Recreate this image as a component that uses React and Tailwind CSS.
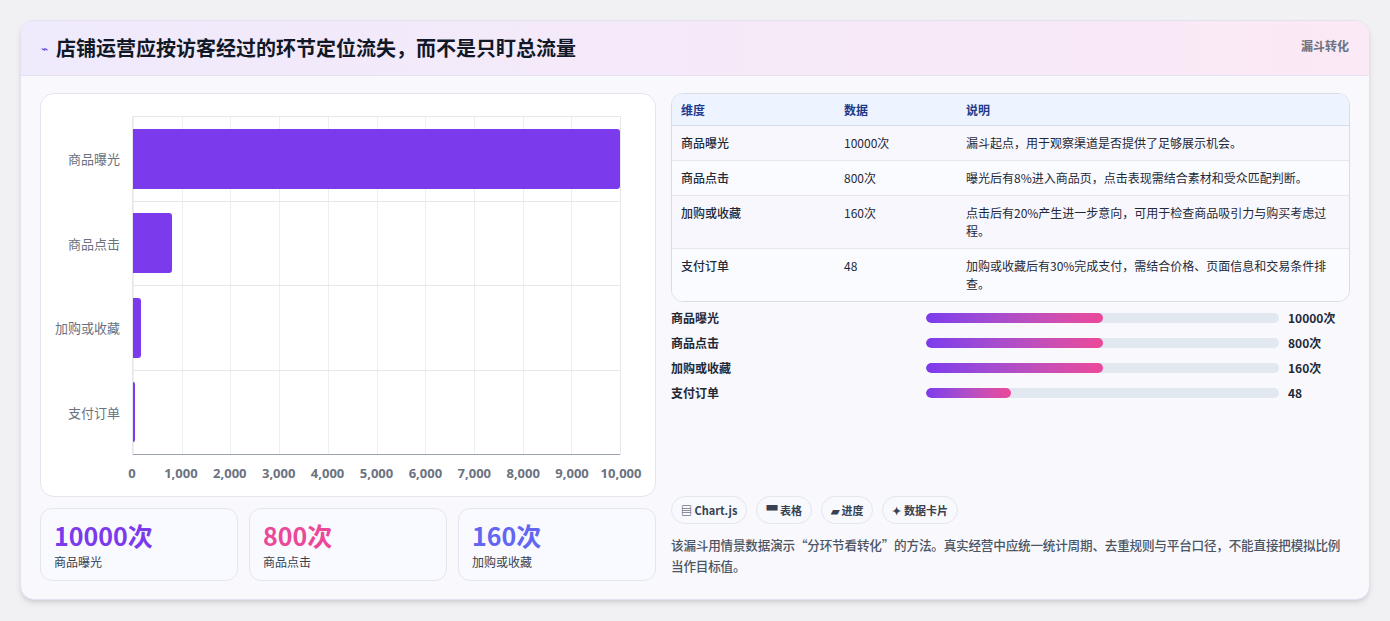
export default function App() {
  const font = { fontFamily: '"Noto Sans CJK SC", "Noto Sans", sans-serif' };
  const rows = [
    ["商品曝光", "10000次", "漏斗起点，用于观察渠道是否提供了足够展示机会。", 10000],
    ["商品点击", "800次", "曝光后有8%进入商品页，点击表现需结合素材和受众匹配判断。", 800],
    ["加购或收藏", "160次", "点击后有20%产生进一步意向，可用于检查商品吸引力与购买考虑过程。", 160],
    ["支付订单", "48", "加购或收藏后有30%完成支付，需结合价格、页面信息和交易条件排查。", 48],
  ];
  const ticks = ["0", "1,000", "2,000", "3,000", "4,000", "5,000", "6,000", "7,000", "8,000", "9,000", "10,000"];
  return (
    <div className="w-[1390px] h-[621px] bg-[#f1f1f4] p-[20px] pb-0" style={font}>
      <div className="h-[580px] rounded-[14px] bg-[#f8f8fd] border border-[#e3e1f0] shadow-md overflow-hidden flex flex-col">
        <div className="h-[55px] flex items-center justify-between px-[20px] bg-gradient-to-r from-[#efeafc] to-[#fbe9f5] border-b border-[#e6e2f3]">
          <div className="flex items-center gap-2">
            <span className="text-[#4f46e5] text-[12px]">⌁</span>
            <span className="text-[20px] font-bold text-[#111827]">店铺运营应按访客经过的环节定位流失，而不是只盯总流量</span>
          </div>
          <span className="text-[12px] font-bold text-[#6b7280] self-start mt-[16px]">漏斗转化</span>
        </div>
        <div className="flex gap-[15px] px-[19px] pt-[17px]">
          <div className="w-[616px] flex flex-col gap-[11px]">
            <div className="h-[404px] bg-white rounded-[14px] border border-[#e3e6ef] relative">
              <div className="absolute left-[91px] top-[22px] w-[489px] h-[339px] border-l border-t border-r border-[#e5e7eb] flex flex-col">
                {[0,1,2,3,4,5,6,7,8,9].map(i => (
                  <div key={i} className="absolute top-0 bottom-0 border-l border-[#eceef2]" style={{ left: `${i * 10}%` }} />
                ))}
                {rows.map((r, i) => (
                  <div key={i} className={`flex-1 flex items-center relative ${i < 3 ? "border-b border-[#e5e7eb]" : "border-b border-[#9ca3af]"}`}>
                    <span className="absolute right-[500px] text-[13px] text-[#6b7280] whitespace-nowrap">{r[0]}</span>
                    <div className="h-[60px] bg-[#7c3aed] rounded-r-[3px] relative" style={{ width: `${Math.max(r[3] / 100, 0.4)}%`, minWidth: 2 }} />
                  </div>
                ))}
              </div>
              <div className="absolute left-[91px] top-[370px] w-[489px]">
                {ticks.map((t, i) => (
                  <span key={i} className="absolute -translate-x-1/2 text-[13px] font-bold text-[#6b7280]" style={{ left: `${i * 10}%`, fontFamily: '"Open Sans", sans-serif' }}>{t}</span>
                ))}
              </div>
            </div>
            <div className="flex gap-[11px]">
              {[["10000次", "商品曝光", "text-[#7c3aed]"], ["800次", "商品点击", "text-[#ec4899]"], ["160次", "加购或收藏", "text-[#6366f1]"]].map((s, i) => (
                <div key={i} className="w-[198px] h-[73px] bg-[#f8faff] rounded-[12px] border border-[#e3e6ef] px-[13px] pt-[8px]">
                  <div className={`text-[25px] font-bold leading-[36px] ${s[2]}`}>{s[0]}</div>
                  <div className="text-[12px] text-[#374151]">{s[1]}</div>
                </div>
              ))}
            </div>
          </div>
          <div className="flex-1 flex flex-col">
            <div className="rounded-[12px] border border-[#d8dce8] overflow-hidden text-[12px] text-[#1f2937] bg-white">
              <div className="flex h-[32px] items-center bg-[#eef4ff] border-b border-[#d8dce8] font-bold text-[#1e3a8a]">
                <div className="w-[172px] pl-[9px]">维度</div>
                <div className="w-[122px]">数据</div>
                <div className="flex-1">说明</div>
              </div>
              {rows.map((r, i) => (
                <div key={i} className={`flex py-[8px] leading-[18px] ${i % 2 ? "bg-[#fafbff]" : "bg-[#f8f7fd]"} ${i < 3 ? "border-b border-[#e5e7eb]" : ""}`}>
                  <div className="w-[172px] pl-[9px] font-medium">{r[0]}</div>
                  <div className="w-[122px]">{r[1]}</div>
                  <div className="flex-1 pr-[14px]">{r[2]}</div>
                </div>
              ))}
            </div>
            <div className="flex flex-col gap-[6px] mt-[6px]">
              {rows.map((r, i) => (
                <div key={i} className="flex items-center h-[19px] text-[12px] font-bold text-[#1f2937]">
                  <div className="w-[255px]">{r[0]}</div>
                  <div className="w-[353px] h-[10px] rounded-full bg-[#e2e8f0] overflow-hidden">
                    <div className="h-full rounded-full bg-gradient-to-r from-[#7c3aed] to-[#ec4899]" style={{ width: i === 3 ? "24%" : "50%" }} />
                  </div>
                  <div className="pl-[9px]">{r[1]}</div>
                </div>
              ))}
            </div>
            <div className="flex gap-[9px] mt-[94px] text-[11px] font-bold text-[#374151]">
              {["▤ Chart.js", "▀ 表格", "▰ 进度", "✦ 数据卡片"].map(t => (
                <span key={t} className="px-[9px] h-[28px] flex items-center rounded-full border border-[#e3e6ef] bg-[#f8f9fc]">{t}</span>
              ))}
            </div>
            <p className="mt-[10px] text-[12.6px] font-medium text-[#4b5563] leading-[21px] tracking-[-0.2px]">该漏斗用情景数据演示“分环节看转化”的方法。真实经营中应统一统计周期、去重规则与平台口径，不能直接把模拟比例当作目标值。</p>
          </div>
        </div>
      </div>
    </div>
  );
}
